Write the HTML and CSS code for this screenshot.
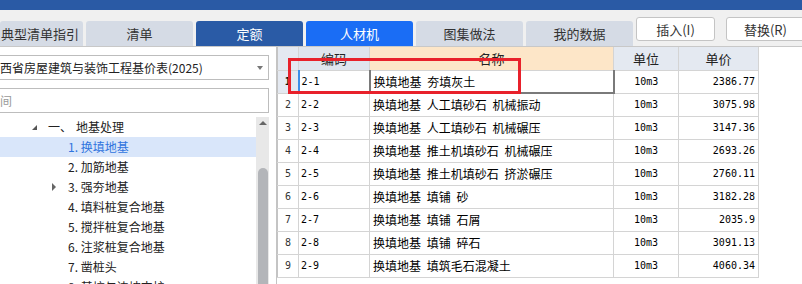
FILE: index.html
```html
<!DOCTYPE html>
<html lang="zh-CN">
<head>
    <meta charset="UTF-8">
    <title>定额</title>
    <link rel="stylesheet" href="styles.css">
</head>
<body>

    <div class="titlebar"></div>

    <div class="toolbar">
        <div class="tabs">
            <div class="tab first">典型清单指引</div>
            <div class="tab">清单</div>
            <div class="tab active">定额</div>
            <div class="tab hover">人材机</div>
            <div class="tab">图集做法</div>
            <div class="tab">我的数据</div>
        </div>
        <div class="actions">
            <button class="btn">插入(I)</button>
            <button class="btn">替换(R)</button>
        </div>
    </div>

    <div class="main">
        <div class="side">
            <div class="select">
                <span>西省房屋建筑与装饰工程基价表(2025)</span>
                <span class="caret"></span>
            </div>
            <div class="search">间</div>

            <div class="tree-wrap">
                <ul class="tree">
                    <li class="node open"><span class="tri down"></span><span class="num">一、</span>地基处理</li>
                    <li class="node child selected">1. 换填地基</li>
                    <li class="node child">2. 加筋地基</li>
                    <li class="node child"><span class="tri right"></span>3. 强夯地基</li>
                    <li class="node child">4. 填料桩复合地基</li>
                    <li class="node child">5. 搅拌桩复合地基</li>
                    <li class="node child">6. 注浆桩复合地基</li>
                    <li class="node child">7. 凿桩头</li>
                    <li class="node child">8. 基坑与边坡支护</li>
                </ul>
                <div class="scrollbar">
                    <span class="up"></span>
                    <span class="thumb"></span>
                </div>
            </div>
        </div>

        <div class="grid">
            <table>
                <colgroup>
                    <col class="c-no">
                    <col class="c-code">
                    <col class="c-name">
                    <col class="c-unit">
                    <col class="c-price">
                </colgroup>
                <thead>
                    <tr>
                        <th class="h-no"></th>
                        <th class="h-code">编码</th>
                        <th class="h-name">名称</th>
                        <th>单位</th>
                        <th>单价</th>
                    </tr>
                </thead>
                <tbody>
                    <tr class="current">
                        <td class="no">1</td><td class="code">2-1</td><td class="name">换填地基 夯填灰土</td><td class="unit">10m3</td><td class="price">2386.77</td>
                    </tr>
                    <tr>
                        <td class="no">2</td><td class="code">2-2</td><td class="name">换填地基 人工填砂石 机械振动</td><td class="unit">10m3</td><td class="price">3075.98</td>
                    </tr>
                    <tr>
                        <td class="no">3</td><td class="code">2-3</td><td class="name">换填地基 人工填砂石 机械碾压</td><td class="unit">10m3</td><td class="price">3147.36</td>
                    </tr>
                    <tr>
                        <td class="no">4</td><td class="code">2-4</td><td class="name">换填地基 推土机填砂石 机械碾压</td><td class="unit">10m3</td><td class="price">2693.26</td>
                    </tr>
                    <tr>
                        <td class="no">5</td><td class="code">2-5</td><td class="name">换填地基 推土机填砂石 挤淤碾压</td><td class="unit">10m3</td><td class="price">2760.11</td>
                    </tr>
                    <tr>
                        <td class="no">6</td><td class="code">2-6</td><td class="name">换填地基 填铺 砂</td><td class="unit">10m3</td><td class="price">3182.28</td>
                    </tr>
                    <tr>
                        <td class="no">7</td><td class="code">2-7</td><td class="name">换填地基 填铺 石屑</td><td class="unit">10m3</td><td class="price">2035.9</td>
                    </tr>
                    <tr>
                        <td class="no">8</td><td class="code">2-8</td><td class="name">换填地基 填铺 碎石</td><td class="unit">10m3</td><td class="price">3091.13</td>
                    </tr>
                    <tr>
                        <td class="no">9</td><td class="code">2-9</td><td class="name">换填地基 填筑毛石混凝土</td><td class="unit">10m3</td><td class="price">4060.34</td>
                    </tr>
                </tbody>
            </table>
        </div>
    </div>

    <!-- red box drawn over the first row -->
    <div class="highlight"></div>

</body>
</html>
```

FILE: styles.css
```css
* { box-sizing: border-box; }

body {
    margin: 0;
    width: 802px;
    height: 284px;
    overflow: hidden;
    position: relative;
    background: #f0f0f0;
    font-family: "Noto Sans CJK SC", "Noto Sans", sans-serif;
    font-size: 12px;
    color: #222;
}

.titlebar { height: 10px; background: #2a5aa5; }

/* tabs + buttons */
.toolbar { display: flex; height: 36px; }
.tabs { display: flex; gap: 3px; align-items: flex-end; }
.tab {
    width: 107px; height: 25px;
    background: #d5dbe5;
    border-radius: 3px 3px 0 0;
    display: flex; align-items: center; justify-content: center;
    font-size: 13px; color: #333;
}
.tab.first { width: 83px; justify-content: flex-start; padding-left: 1px; }
.tab.active { background: #2a5ba6; color: #fff; }
.tab.hover { background: #1a6df5; color: #fff; }

.actions { display: flex; gap: 11px; margin-left: 3px; padding-top: 7px; }
.btn {
    width: 79px; height: 24px;
    background: #fff;
    border: 1px solid #c4c4c4;
    border-radius: 3px;
    font-family: inherit; font-size: 13px; color: #333;
    padding: 0;
}

/* body area */
.main {
    display: flex;
    height: 238px;
    border-top: 1px solid #c8c8c8;
    background: #fff;
}

.side {
    width: 277px;
    border-right: 1px solid #c4c4c4;
    padding-top: 8px;
    overflow: hidden;
}

.select, .search {
    margin-left: -4px;
    width: 273px;
    height: 25px;
    border: 1px solid #bdbdbd;
    background: #fff;
    padding-left: 3px;
    display: flex; align-items: center;
    font-size: 12px;
}
.select { justify-content: space-between; padding-right: 5px; color: #222; }
.caret {
    width: 0; height: 0;
    border-left: 3px solid transparent;
    border-right: 3px solid transparent;
    border-top: 4px solid #777;
}
.search { margin-top: 8px; color: #999; }

.tree-wrap { display: flex; margin-top: 4px; height: 180px; }
.tree {
    list-style: none; margin: 0; padding: 0;
    width: 256px;
}
.node {
    height: 20px; line-height: 20px;
    position: relative;
    padding-left: 48px;
    white-space: nowrap;
    color: #222;
}
.node .num { margin-right: 4px; }
.node.child { padding-left: 68px; }
.node.selected { background: #d9e6fa; color: #2f74de; }
.tri { position: absolute; width: 0; height: 0; }
.tri.down {
    left: 32px; top: 8px;
    border-left: 5px solid transparent;
    border-bottom: 5px solid #555;
}
.tri.right {
    left: 52px; top: 6px;
    border-top: 4px solid transparent;
    border-bottom: 4px solid transparent;
    border-left: 4px solid #666;
}

.scrollbar {
    width: 13px;
    background: #e8e8e8;
    display: flex; flex-direction: column; align-items: center;
}
.up {
    margin-top: 4px;
    width: 0; height: 0;
    border-left: 4px solid transparent;
    border-right: 4px solid transparent;
    border-bottom: 4px solid #666;
}
.thumb {
    margin-top: 43px;
    width: 10px; flex: 1;
    background: #b3b5b9;
    border-radius: 5px 5px 0 0;
}

/* grid */
.grid { flex: 1; background: #fff; }
table {
    border-collapse: collapse;
    table-layout: fixed;
    width: 481px;
}
.c-no { width: 21px; }
.c-code { width: 71px; }
.c-name { width: 244px; }
.c-unit { width: 65px; }
.c-price { width: 80px; }

th, td {
    height: 23px;
    padding: 0;
    border: 1px solid #d4d4d4;
    white-space: nowrap;
    overflow: hidden;
}
th {
    background: #e4e9f1;
    font-weight: normal;
    font-size: 13px;
    color: #222;
    border-top: none;
}
th.h-code { background: #dfe5ee; }
th.h-name { background: #fde6c8; }
th:first-child, td:first-child { border-left-color: #c4c4c4; }

td { font-size: 12px; color: #000; }
td.no, td.code, td.unit, td.price {
    font-family: "DejaVu Sans Mono", "Liberation Mono", monospace;
    font-size: 10px;
}
td.no { text-align: center; color: #333; }
td.code { padding-left: 2px; }
td.name { padding-left: 3px; word-spacing: 3px; }
td.unit { text-align: center; }
td.price { text-align: right; padding-right: 3px; }

tr.current td.no { background: #e4e9f1; font-weight: bold; color: #111; }
tr.current td.code { border-left: 2px solid #3d8ee8; }
tr.current td.name {
    border: 2px solid #7a7a7a;
    border-top: 1px solid #3d8ee8;
}

.highlight {
    position: absolute;
    left: 288px; top: 58px;
    width: 233px; height: 36px;
    border: 3px solid #e8212b;
}
```
